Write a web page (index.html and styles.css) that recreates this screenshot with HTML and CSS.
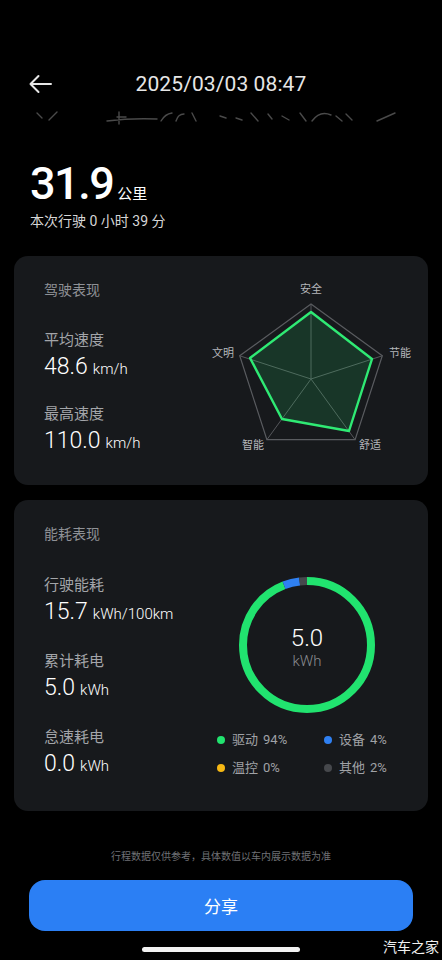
FILE: index.html
```html
<!DOCTYPE html>
<html lang="zh-CN">
<head>
  <meta charset="UTF-8">
  <meta name="viewport" content="width=device-width, initial-scale=1.0">
  <title>行程详情</title>
  <link rel="stylesheet" href="styles.css">
</head>
<body>

  <div class="topbar">
    <svg class="back" width="24" height="24" viewBox="0 0 24 24">
      <path d="M22 12H1.5M9.5 4L1.5 12L9.5 20" fill="none" stroke="#e6e6e6" stroke-width="2" stroke-linecap="round" stroke-linejoin="round"/>
    </svg>
    <div class="titulo">2025/03/03 08:47</div>
  </div>

  <svg class="mapa" width="442" height="18" viewBox="0 108 442 18">
    <g fill="none" stroke="#4a4a4a" stroke-width="1.4" stroke-linecap="round">
      <path d="M37 113L42 118M49 120L57 112"/>
      <path d="M107 121Q130 118 157 119M119 112V124M117 117H126"/>
      <path d="M161 121Q165 114 172 113M176 121Q178 114 184 114M192 113L196 121"/>
      <path d="M220 116L226 118M236 118L242 120M251 113L258 121M268 114L272 119M282 116L289 120"/>
      <path d="M300 113L306 121M312 121Q320 110 331 115M336 116L342 121M346 114L352 120"/>
      <path d="M377 121L395 113"/>
    </g>
  </svg>

  <div class="viaje">
    <div class="distancia">31.9<span class="unidad">公里</span></div>
    <div class="duracion">本次行驶 0 小时 39 分</div>
  </div>

  <div class="tarjeta tarjeta-manejo">
    <div class="columna">
      <div class="titulo-tarjeta">驾驶表现</div>
      <div class="dato dato-1">
        <div class="etiqueta">平均速度</div>
        <div class="valor">48.6<span class="unidad-valor">km/h</span></div>
      </div>
      <div class="dato dato-2">
        <div class="etiqueta">最高速度</div>
        <div class="valor">110.0<span class="unidad-valor">km/h</span></div>
      </div>
    </div>
    <svg class="radar" width="220" height="229" viewBox="207 256 220 229">
      <polygon points="310,304 381.3,355.8 354.1,439.7 265.9,439.7 238.7,355.8" fill="none" stroke="#5a5c60" stroke-width="1.2"/>
      <g stroke="#55575b" stroke-width="1">
        <line x1="310" y1="379" x2="310" y2="304"/>
        <line x1="310" y1="379" x2="381.3" y2="355.8"/>
        <line x1="310" y1="379" x2="354.1" y2="439.7"/>
        <line x1="310" y1="379" x2="265.9" y2="439.7"/>
        <line x1="310" y1="379" x2="238.7" y2="355.8"/>
      </g>
      <polygon points="310,312 371,359 348,431 281,419 249,358" fill="rgba(38,232,110,0.14)" stroke="#2fea74" stroke-width="2.4" stroke-linejoin="round"/>
      <g class="radar-texto" font-size="11" fill="#b4b6ba" text-anchor="middle">
        <text x="310" y="293">安全</text>
        <text x="399" y="357">节能</text>
        <text x="369" y="449">舒适</text>
        <text x="252" y="449">智能</text>
        <text x="222" y="357">文明</text>
      </g>
    </svg>
  </div>

  <div class="tarjeta tarjeta-energia">
    <div class="columna">
      <div class="titulo-tarjeta">能耗表现</div>
      <div class="dato dato-3">
        <div class="etiqueta">行驶能耗</div>
        <div class="valor">15.7<span class="unidad-valor">kWh/100km</span></div>
      </div>
      <div class="dato dato-4">
        <div class="etiqueta">累计耗电</div>
        <div class="valor">5.0<span class="unidad-valor">kWh</span></div>
      </div>
      <div class="dato dato-4">
        <div class="etiqueta">怠速耗电</div>
        <div class="valor">0.0<span class="unidad-valor">kWh</span></div>
      </div>
    </div>
    <div class="columna-derecha">
      <svg class="dona" width="140" height="140" viewBox="0 0 140 140">
        <g transform="rotate(-90 70 70)" fill="none" stroke-width="8">
          <circle cx="70" cy="70" r="64" stroke="#21e36f" stroke-dasharray="378 24.1"/>
          <circle cx="70" cy="70" r="64" stroke="#2f80f2" stroke-dasharray="16 386.1" stroke-dashoffset="-378"/>
          <circle cx="70" cy="70" r="64" stroke="#46484c" stroke-dasharray="8.1 394" stroke-dashoffset="-394"/>
        </g>
        <text x="70" y="71" text-anchor="middle" class="dona-num">5.0</text>
        <text x="70" y="91" text-anchor="middle" class="dona-unidad">kWh</text>
      </svg>
      <div class="leyenda">
        <div class="item"><span class="punto verde"></span>驱动<span class="pct">94%</span></div>
        <div class="item"><span class="punto azul"></span>设备<span class="pct">4%</span></div>
        <div class="item"><span class="punto amarillo"></span>温控<span class="pct">0%</span></div>
        <div class="item"><span class="punto gris"></span>其他<span class="pct">2%</span></div>
      </div>
    </div>
  </div>

  <div class="aviso">行程数据仅供参考，具体数值以车内展示数据为准</div>

  <button class="compartir">分享</button>

  <div class="indicador"></div>
  <div class="marca">汽车之家</div>

</body>
</html>
```

FILE: styles.css
```css
* {
  box-sizing: border-box;
}

body {
  font-family: Roboto, "Noto Sans CJK SC", sans-serif;
  background: #000;
  color: #fff;
  margin: 0;
  padding: 0;
  width: 442px;
  height: 960px;
  position: relative;
  overflow: hidden;
}

.topbar {
  margin-top: 62px;
  height: 44px;
  display: flex;
  align-items: center;
  position: relative;
  justify-content: center;
}

.back {
  position: absolute;
  left: 29px;
  top: 10px;
}

.titulo {
  font-size: 21px;
  color: #e6e6e6;
  letter-spacing: 0.1px;
}

.mapa {
  display: block;
  margin-top: 2px;
}

.viaje {
  padding: 0 30px;
  margin-top: 33px;
}

.distancia {
  font-size: 45px;
  height: 50px;
  line-height: 50px;
  font-weight: 500;
  letter-spacing: -1.5px;
  display: flex;
  align-items: baseline;
}

.unidad {
  font-size: 15px;
  line-height: 1;
  font-weight: 400;
  letter-spacing: 0;
  margin-left: 4px;
}

.duracion {
  margin-top: 2px;
  font-size: 14px;
  line-height: 20px;
  height: 20px;
  color: #d6d6d6;
}

.tarjeta {
  margin: 0 14px;
  background: #17191c;
  border-radius: 14px;
  display: flex;
}

.tarjeta-manejo {
  margin-top: 25px;
  height: 229px;
}

.tarjeta-energia {
  margin-top: 15px;
  height: 311px;
}

.columna {
  flex: 1;
  padding: 24px 0 0 30px;
}

.titulo-tarjeta {
  font-size: 14px;
  line-height: 20px;
  height: 20px;
  color: #8f9196;
}

.etiqueta {
  font-size: 15px;
  line-height: 22px;
  height: 22px;
  color: #a3a5a9;
}

.valor {
  font-size: 23px;
  line-height: 30px;
  height: 30px;
  margin-top: 1px;
  font-weight: 300;
}

.unidad-valor {
  font-size: 15px;
  font-weight: 300;
  margin-left: 5px;
}

.dato-1 {
  margin-top: 29px;
}

.dato-2 {
  margin-top: 21px;
}

.dato-3 {
  margin-top: 30px;
}

.dato-4 {
  margin-top: 23px;
}

.radar {
  display: block;
  flex-shrink: 0;
}

.radar-texto {
  font-family: "Noto Sans CJK SC", sans-serif;
}

.columna-derecha {
  width: 220px;
  flex-shrink: 0;
  padding-top: 75px;
}

.dona {
  display: block;
  margin-left: 29px;
}

.dona-num {
  font-size: 24px;
  font-weight: 300;
  fill: #fff;
}

.dona-unidad {
  font-size: 15px;
  font-weight: 300;
  fill: #8a8c90;
}

.leyenda {
  margin-top: 15px;
  display: grid;
  grid-template-columns: 107px 100px;
  row-gap: 8px;
  padding-left: 9px;
}

.item {
  font-size: 13px;
  line-height: 20px;
  height: 20px;
  color: #a0a2a6;
  display: flex;
  align-items: center;
}

.pct {
  margin-left: 5px;
}

.punto {
  width: 8px;
  height: 8px;
  border-radius: 50%;
  margin-right: 7px;
}

.verde { background: #21e36f; }
.azul { background: #2f80f2; }
.amarillo { background: #f6b814; }
.gris { background: #46484c; }

.aviso {
  margin-top: 39px;
  text-align: center;
  font-size: 10px;
  line-height: 14px;
  height: 14px;
  color: #6f7175;
}

.compartir {
  display: block;
  margin: 16px 29px 0;
  width: 384px;
  height: 51px;
  border: none;
  border-radius: 16px;
  background: #2b7ff4;
  color: #fff;
  font-family: "Noto Sans CJK SC", sans-serif;
  font-size: 17px;
}

.indicador {
  width: 158px;
  height: 5px;
  border-radius: 3px;
  background: #f2f2f2;
  margin: 16px auto 0;
}

.marca {
  position: absolute;
  right: 3px;
  bottom: 4px;
  font-size: 14px;
  color: #f0f0f0;
  font-family: "Noto Sans CJK SC", sans-serif;
}
```
